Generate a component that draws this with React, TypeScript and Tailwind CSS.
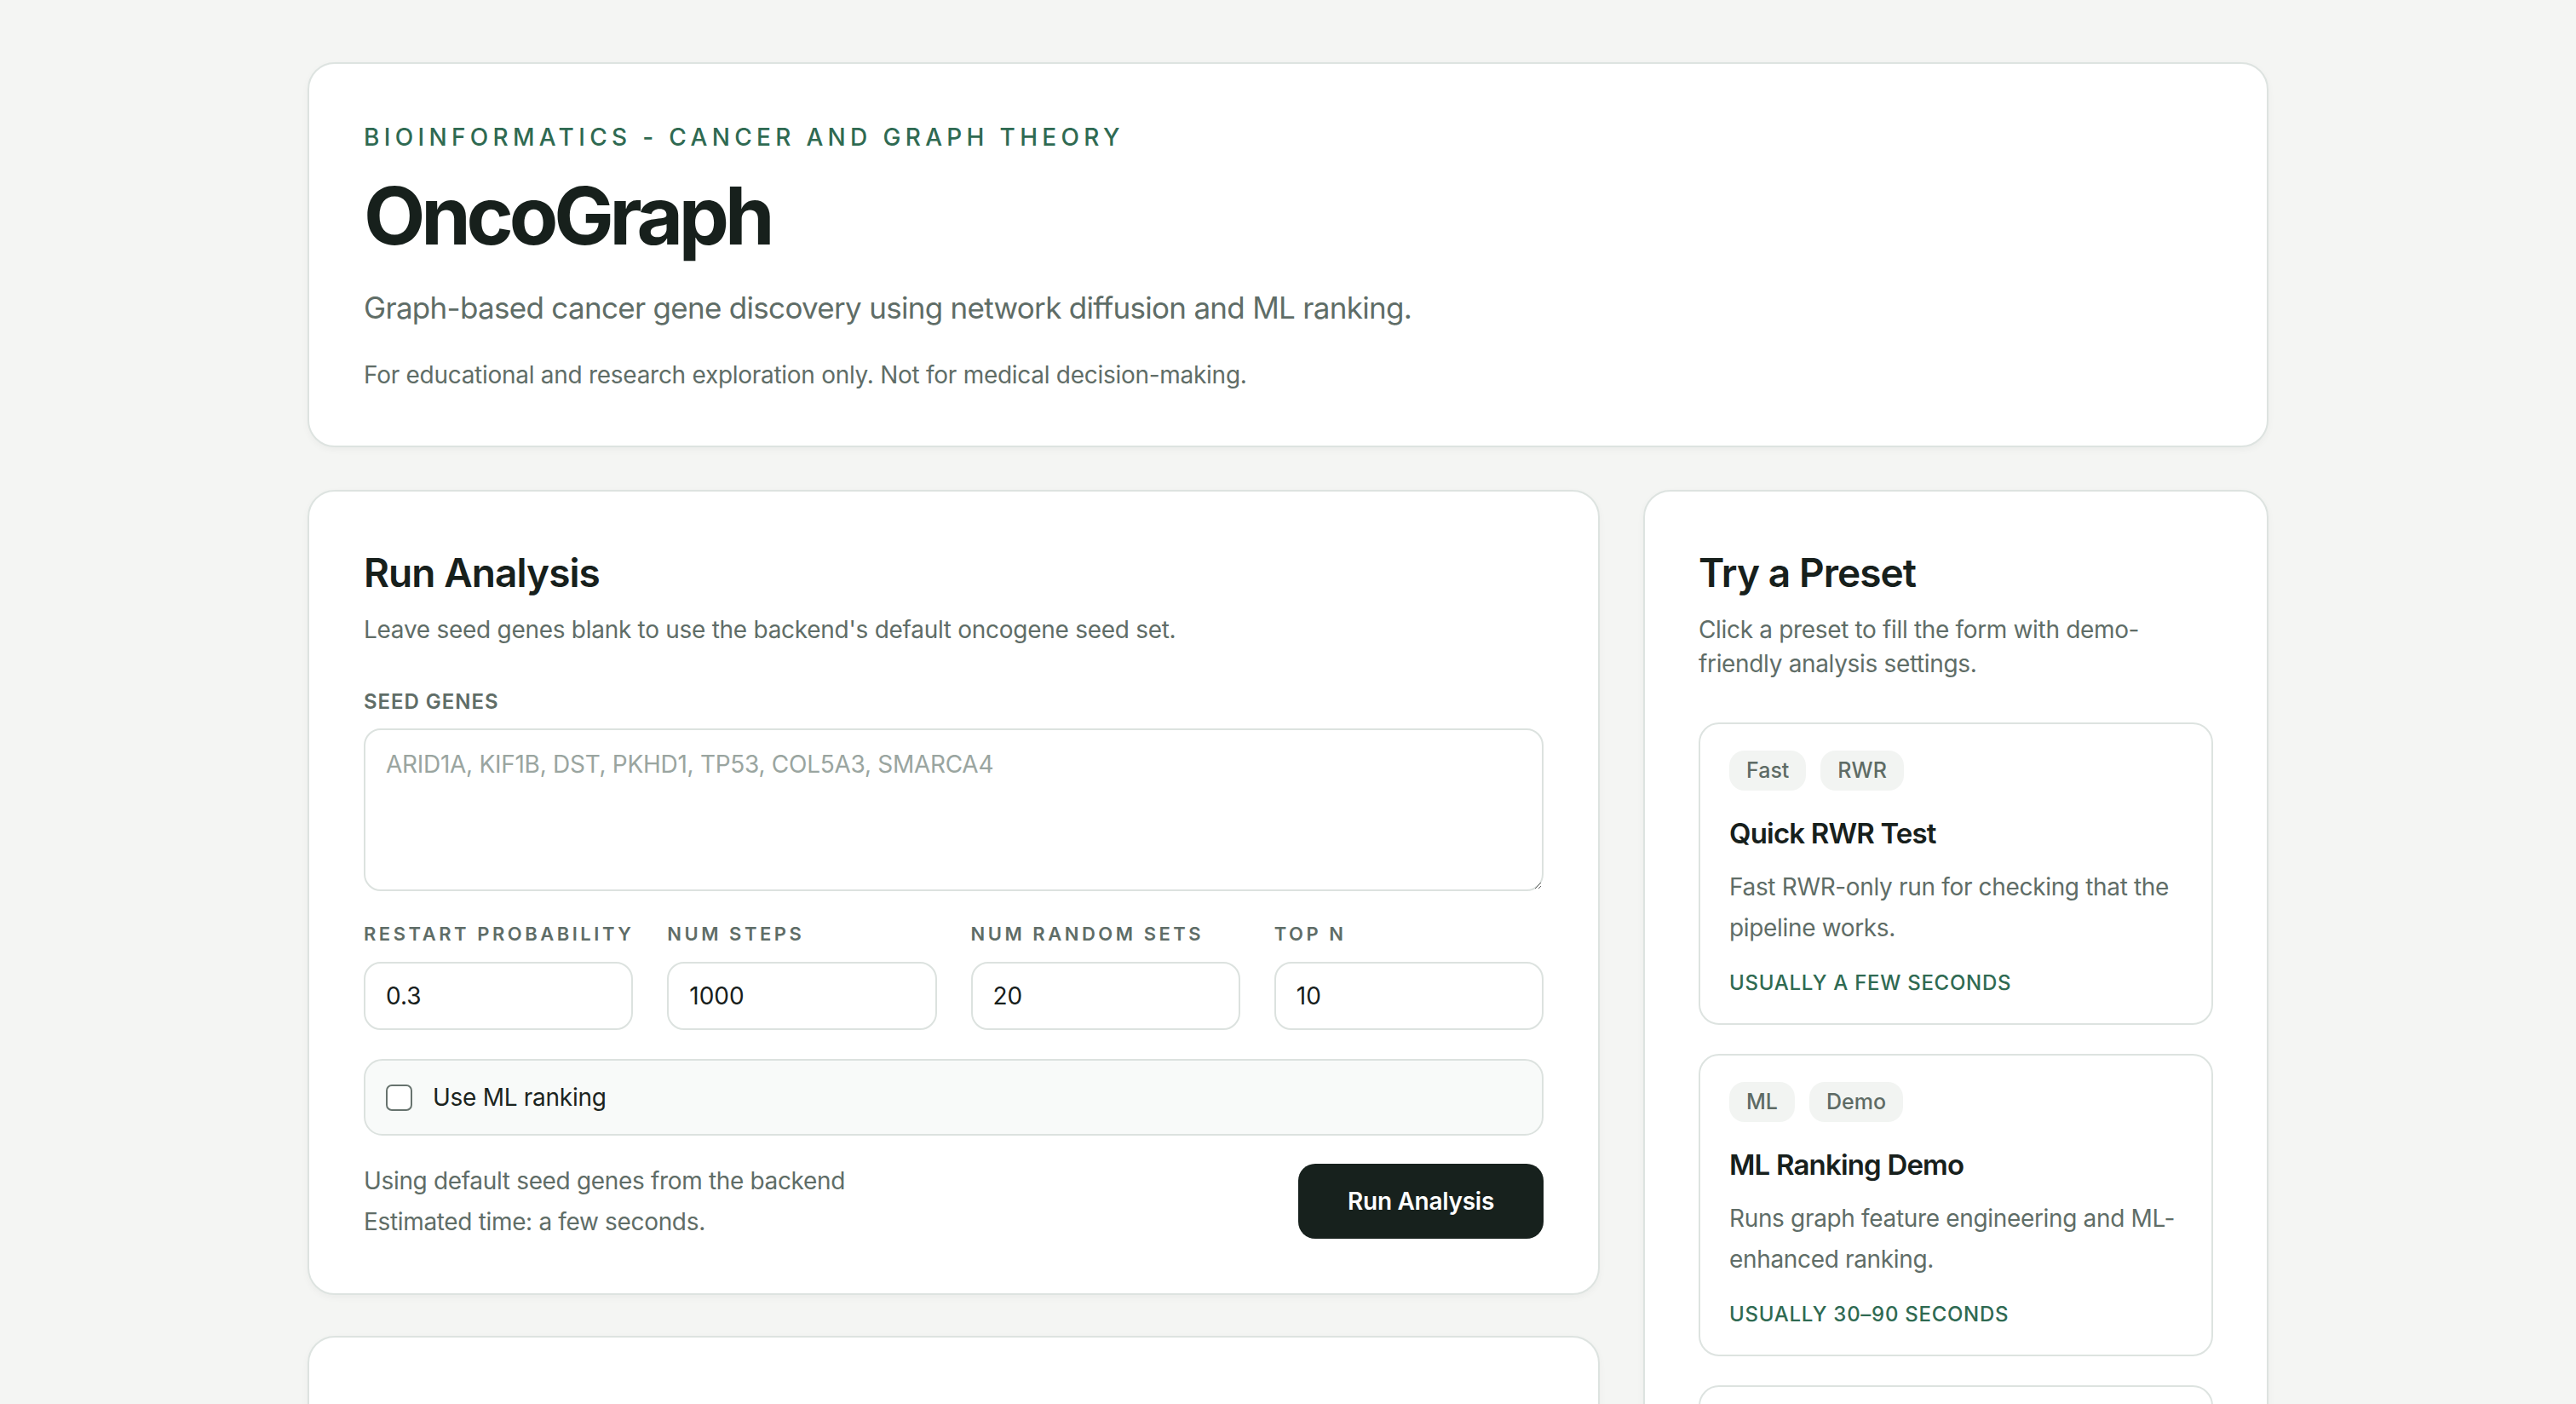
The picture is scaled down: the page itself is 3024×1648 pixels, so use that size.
import type { ReactNode } from 'react';

// Layout is drawn at 2x (the reference is a retina capture of a 1512px page).

type Preset = {
  tags: string[];
  title: string;
  description: string;
  timing: string;
};

const PRESETS: Preset[] = [
  {
    tags: ['Fast', 'RWR'],
    title: 'Quick RWR Test',
    description: 'Fast RWR-only run for checking that the pipeline works.',
    timing: 'Usually a few seconds',
  },
  {
    tags: ['ML', 'Demo'],
    title: 'ML Ranking Demo',
    description: 'Runs graph feature engineering and ML-enhanced ranking.',
    timing: 'Usually 30–90 seconds',
  },
  {
    tags: ['Full', 'Stats'],
    title: 'Full Significance Run',
    description: 'More random seed sets for a stronger empirical p-value estimate.',
    timing: 'Usually a few minutes',
  },
];

const PARAMS = [
  { label: 'Restart probability', value: '0.3' },
  { label: 'Num steps', value: '1000' },
  { label: 'Num random sets', value: '20' },
  { label: 'Top N', value: '10' },
];

function Card({ children, className = '' }: { children: ReactNode; className?: string }) {
  return (
    <section
      className={`rounded-[32px] border-2 border-[#dde3e0] bg-white shadow-[0_3px_8px_rgba(20,32,26,0.04)] ${className}`}
    >
      {children}
    </section>
  );
}

function PresetCard({ preset }: { preset: Preset }) {
  return (
    <button className="w-full rounded-[24px] border-2 border-[#dde3e0] bg-white px-[34px] pt-[31px] pb-[31px] text-left">
      <div className="flex gap-[17px]">
        {preset.tags.map((t) => (
          <span
            key={t}
            className="h-[47px] rounded-[18px] bg-[#f2f4f2] px-[20px] text-[25px] leading-[47px] font-medium text-[#5e6b65]"
          >
            {t}
          </span>
        ))}
      </div>
      <h3 className="mt-[28px] text-[33px] leading-[44px] font-semibold tracking-[-0.025em] text-[#17201c]">
        {preset.title}
      </h3>
      <p className="mt-[17px] text-[28px] leading-[48px] tracking-[-0.012em] text-[#5f6d67]">
        {preset.description}
      </p>
      <p className="mt-[25px] text-[24px] leading-[32px] font-medium uppercase tracking-[0.03em] text-[#2f6a52]">
        {preset.timing}
      </p>
    </button>
  );
}

export default function App() {
  return (
    <div className="min-h-screen bg-[#f4f5f3] font-['Inter','Liberation_Sans',sans-serif] text-[#17201c] antialiased">
      <div className="mx-auto w-[2302px] pt-[73px] pb-[96px]">
        {/* hero */}
        <Card className="px-[64px] pt-[64px] pb-[63px]">
          <p className="mt-[2px] text-[28px] leading-[40px] font-medium uppercase tracking-[0.19em] text-[#2f6a52]">
            Bioinformatics - Cancer and Graph Theory
          </p>
          <h1 className="mt-[24px] text-[94px] leading-[96px] font-bold tracking-[-0.055em] text-[#17201c]">
            OncoGraph
          </h1>
          <p className="mt-[34px] text-[35px] leading-[52px] tracking-[-0.02em] text-[#5f6d67]">
            Graph-based cancer gene discovery using network diffusion and ML ranking.
          </p>
          <p className="mt-[33px] text-[28px] leading-[40px] tracking-[-0.01em] text-[#5f6d67]">
            For educational and research exploration only. Not for medical decision-making.
          </p>
        </Card>

        <div className="mt-[50px] grid grid-cols-[1517px_734px] items-start gap-[51px]">
          <div className="flex flex-col gap-[48px]">
            {/* run form */}
            <Card className="px-[64px] pt-[68px] pb-[60px]">
              <h2 className="text-[46px] leading-[55px] font-semibold tracking-[-0.02em]">Run Analysis</h2>
              <p className="mt-[19px] text-[28px] leading-[40px] tracking-[-0.01em] text-[#5f6d67]">
                Leave seed genes blank to use the backend's default oncogene seed set.
              </p>

              <label className="mt-[49px] block text-[24px] leading-[32px] font-semibold uppercase tracking-[0.04em] text-[#5f6d67]">
                Seed genes
              </label>
              <textarea
                className="mt-[15px] block h-[191px] w-full rounded-[20px] border-2 border-[#dce2df] bg-white px-[24px] pt-[20px] text-[28px] leading-[40px] tracking-[-0.01em] text-[#17201c] outline-none placeholder:text-[#9aa5a0]"
                placeholder="ARID1A, KIF1B, DST, PKHD1, TP53, COL5A3, SMARCA4"
              />

              <div className="mt-[34px] grid grid-cols-4 gap-[40px]">
                {PARAMS.map((p) => (
                  <div key={p.label} className="flex flex-col">
                    <span className="text-[22px] leading-[32px] font-semibold uppercase tracking-[0.16em] whitespace-nowrap text-[#5f6d67]">
                      {p.label}
                    </span>
                    <input
                      type="text"
                      defaultValue={p.value}
                      className="mt-[17px] h-[80px] w-full rounded-[20px] border-2 border-[#dce2df] bg-white px-[24px] text-[28px] text-[#17201c] outline-none"
                    />
                  </div>
                ))}
              </div>

              <label className="mt-[34px] flex h-[90px] items-center gap-[24px] rounded-[22px] border-2 border-[#dce2df] bg-[#f8faf9] px-[24px]">
                <input
                  type="checkbox"
                  className="h-[31px] w-[31px] appearance-none rounded-[7px] border-2 border-[#67736e] bg-white"
                />
                <span className="text-[28px] leading-[40px] tracking-[-0.01em] text-[#1b2420]">Use ML ranking</span>
              </label>

              <div className="mt-[29px] flex items-center justify-between">
                <div className="text-[28px] leading-[48px] tracking-[-0.012em] text-[#5f6d67]">
                  <p>Using default seed genes from the backend</p>
                  <p>Estimated time: a few seconds.</p>
                </div>
                <button className="h-[88px] rounded-[20px] bg-[#17211d] px-[58px] text-[28px] font-semibold tracking-[-0.01em] text-white">
                  Run Analysis
                </button>
              </div>
            </Card>

            {/* summary (below the fold) */}
            <Card className="px-[64px] pt-[68px] pb-[62px]">
              <h2 className="text-[46px] leading-[55px] font-semibold tracking-[-0.02em]">Run Summary</h2>
              <p className="mt-[19px] text-[28px] leading-[40px] text-[#5f6d67]">
                Results will appear here after an analysis run completes.
              </p>
            </Card>
          </div>

          {/* presets */}
          <Card className="px-[63px] pt-[68px] pb-[62px]">
            <h2 className="text-[46px] leading-[55px] font-semibold tracking-[-0.02em]">Try a Preset</h2>
            <p className="mt-[19px] text-[28px] leading-[40px] tracking-[-0.012em] text-[#5f6d67]">
              Click a preset to fill the form with demo-friendly analysis settings.
            </p>
            <div className="mt-[49px] flex flex-col gap-[34px]">
              {PRESETS.map((p) => (
                <PresetCard key={p.title} preset={p} />
              ))}
            </div>
          </Card>
        </div>
      </div>
    </div>
  );
}
